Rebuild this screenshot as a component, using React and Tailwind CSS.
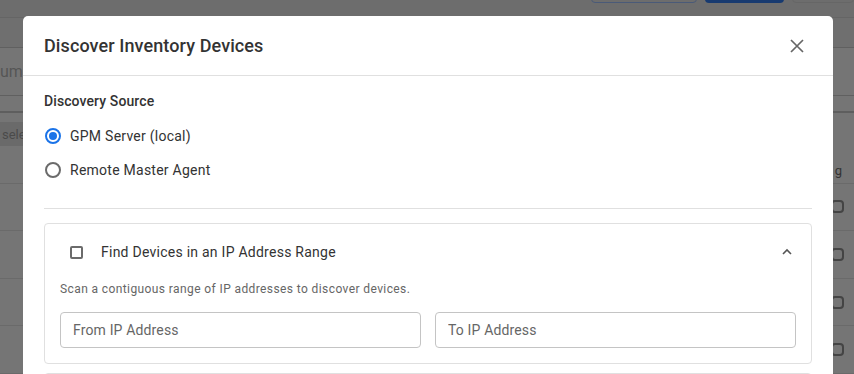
import React from 'react';

const font = { fontFamily: 'Roboto, "Liberation Sans", sans-serif' };

const Radio = ({ checked, label }) => (
  <label className="flex items-center gap-[9px] h-[34px] cursor-pointer">
    <span
      className={`ml-[1px] flex items-center justify-center w-[16px] h-[16px] rounded-full border-2 ${
        checked ? 'border-[#1a73e8]' : 'border-[#6b6b6b]'
      }`}
    >
      {checked && <span className="w-[8px] h-[8px] rounded-full bg-[#1a73e8]" />}
    </span>
    <span className="text-[14px] tracking-[0.25px] text-[#333]">{label}</span>
  </label>
);

const Backdrop = () => (
  <div className="w-[854px] h-[374px] overflow-hidden bg-[#757575] flex flex-col">
    <div className="h-[18px] bg-[#6d6d6d] border-b border-[#656565] flex justify-end gap-2">
      <div className="-mt-[30px] h-[33px] w-[106px] rounded border border-[#4a5a78]" />
      <div className="-mt-[30px] h-[33px] w-[79px] rounded bg-[#173a70]" />
      <div className="-mt-[30px] h-[33px] w-[62px] rounded border border-[#666]" />
    </div>
    <div className="h-[30px] bg-[#6f6f6f] border-b border-[#606060]" />
    <div className="h-[49px] border-b border-[#606060] flex items-center">
      <span className="text-[16px] text-[#555] pt-[2px]">umn</span>
    </div>
    <div className="h-[17px] border-b-2 border-[#5e5e5e]" />
    <div className="h-[9px]" />
    <div className="h-[24px] flex items-center">
      <span className="bg-[#6a6a6a] h-full flex items-center pl-[2px] pr-6 pt-[2px] text-[13px] text-[#4a4a4a]">sele</span>
    </div>
    <div className="h-[38px] border-b border-[#6a6a6a] flex justify-end items-end pb-[2px] pr-[12px]">
      <span className="text-[13px] text-[#333]">g</span>
    </div>
    {[0, 1, 2, 3].map((i) => (
      <div key={i} className="h-[48px] border-b border-[#6a6a6a] flex justify-end items-center pr-[10px]">
        <span className="w-[13px] h-[13px] rounded-sm border-2 border-[#444]" />
      </div>
    ))}
  </div>
);

export default function App() {
  return (
    <div className="relative w-[854px] h-[374px] overflow-hidden" style={font}>
      <Backdrop />
      <div className="absolute left-[23px] top-[16px] w-[810px] h-[400px] bg-white rounded-[5px] flex flex-col">
        <div className="h-[60px] flex items-center justify-between pl-[21px] pr-[29px] border-b border-[#e0e0e0]">
          <h2 className="text-[18px] font-medium text-[#333] tracking-[0.1px]">Discover Inventory Devices</h2>
          <svg width="14" height="14" viewBox="0 0 14 14" className="text-[#666]">
            <path d="M1 1L13 13M13 1L1 13" stroke="currentColor" strokeWidth="1.7" />
          </svg>
        </div>
        <div className="px-[21px] pt-[15px]">
          <div className="text-[14px] font-medium tracking-[0.1px] text-[#333] mb-[7px]">Discovery Source</div>
          <Radio checked label="GPM Server (local)" />
          <Radio label="Remote Master Agent" />
          <div className="mt-[21px] mb-[14px] border-t border-[#e0e0e0]" />
          <div className="rounded-[4px] border border-[#e0e0e0] pb-[15px]">
            <div className="h-[56px] flex items-center justify-between pl-[25px] pr-[18px]">
              <div className="flex items-center gap-[18px]">
                <span className="w-[13px] h-[13px] rounded-[2px] border-2 border-[#6b6b6b]" />
                <span className="text-[14px] tracking-[0.25px] text-[#333]">Find Devices in an IP Address Range</span>
              </div>
              <svg width="12" height="8" viewBox="0 0 12 8" className="text-[#555]">
                <path d="M2 6L6 2L10 6" stroke="currentColor" strokeWidth="1.6" fill="none" />
              </svg>
            </div>
            <div className="px-[15px]">
              <p className="text-[12px] tracking-[0.4px] text-[#666] mb-[14px]">
                Scan a contiguous range of IP addresses to discover devices.
              </p>
              <div className="grid grid-cols-2 gap-[14px]">
                <input
                  placeholder="From IP Address"
                  className="h-[36px] rounded-[4px] border border-[#c4c4c4] px-[12px] text-[14px] tracking-[0.15px] placeholder:text-[#666] outline-none"
                />
                <input
                  placeholder="To IP Address"
                  className="h-[36px] rounded-[4px] border border-[#c4c4c4] px-[12px] text-[14px] tracking-[0.15px] placeholder:text-[#666] outline-none"
                />
              </div>
            </div>
          </div>
          <div className="mt-[9px] h-[40px] rounded-[4px] border border-[#e0e0e0]" />
        </div>
      </div>
    </div>
  );
}
